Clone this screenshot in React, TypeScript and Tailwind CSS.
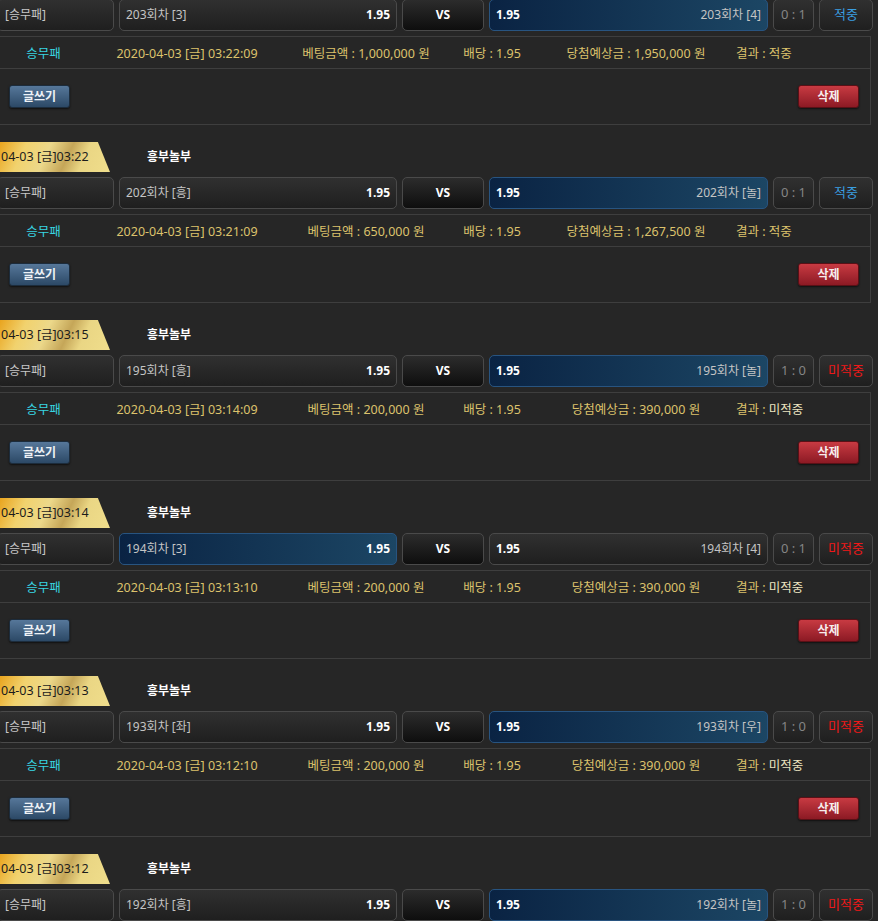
import React from "react";

type Bet = {
  time: string;
  round: number;
  left: string;
  right: string;
  pick: "left" | "right";
  score: string;
  win: boolean;
  placed: string;
  amount: string;
  payout: string;
};

const bets: Bet[] = [
  { time: "04-03 [금]03:23", round: 203, left: "[3]", right: "[4]", pick: "right", score: "0 : 1", win: true, placed: "2020-04-03 [금] 03:22:09", amount: "1,000,000", payout: "1,950,000" },
  { time: "04-03 [금]03:22", round: 202, left: "[흥]", right: "[놀]", pick: "right", score: "0 : 1", win: true, placed: "2020-04-03 [금] 03:21:09", amount: "650,000", payout: "1,267,500" },
  { time: "04-03 [금]03:15", round: 195, left: "[흥]", right: "[놀]", pick: "right", score: "1 : 0", win: false, placed: "2020-04-03 [금] 03:14:09", amount: "200,000", payout: "390,000" },
  { time: "04-03 [금]03:14", round: 194, left: "[3]", right: "[4]", pick: "left", score: "0 : 1", win: false, placed: "2020-04-03 [금] 03:13:10", amount: "200,000", payout: "390,000" },
  { time: "04-03 [금]03:13", round: 193, left: "[좌]", right: "[우]", pick: "right", score: "1 : 0", win: false, placed: "2020-04-03 [금] 03:12:10", amount: "200,000", payout: "390,000" },
  { time: "04-03 [금]03:12", round: 192, left: "[흥]", right: "[놀]", pick: "right", score: "1 : 0", win: false, placed: "2020-04-03 [금] 03:11:10", amount: "200,000", payout: "390,000" },
];

const plainBox =
  "h-full rounded-[5px] border border-[#4a4a4a] bg-[linear-gradient(180deg,#303030_0%,#1f1f1f_100%)]";
const pickedBox =
  "h-full rounded-[5px] border border-[#285480] bg-[linear-gradient(90deg,#0a2343_0%,#1c4664_100%)]";

function BetBlock({ bet }: { bet: Bet }) {
  return (
    <div className="pt-[17px]">
      <div className="flex h-[30px] items-center">
        <div className="flex h-[30px] w-[110px] items-center pl-px text-[12.5px] text-[#1c1c1c] [clip-path:polygon(0_0,89%_0,100%_100%,0_100%)] bg-[linear-gradient(115deg,#e9a41e_0%,#f1d26e_22%,#ecd88a_42%,#c5a658_60%,#ead684_74%,#f0de8c_100%)]">
          {bet.time}
        </div>
        <span className="ml-[37px] text-[12px] font-bold text-white">흥부놀부</span>
      </div>

      <div className="mt-[5px] flex h-[32px] gap-[5px] -ml-[3px] text-[12px]">
        <div className={`${plainBox} flex w-[117px] items-center pl-[7px] text-[#c8c8c8]`}>[승무패]</div>
        <div
          className={`${bet.pick === "left" ? pickedBox : plainBox} flex w-[278px] items-center justify-between px-[6px]`}
        >
          <span className="text-[#c4c4c4]">
            {bet.round}회차 {bet.left}
          </span>
          <span className="font-bold text-white">1.95</span>
        </div>
        <div className="flex h-full w-[82px] items-center justify-center rounded-[5px] border border-[#4a4a4a] bg-[linear-gradient(180deg,#2c2c2c_0%,#0e0e0e_100%)] font-bold text-white">
          VS
        </div>
        <div
          className={`${bet.pick === "right" ? pickedBox : plainBox} flex w-[279px] items-center justify-between px-[6px]`}
        >
          <span className="font-bold text-white">1.95</span>
          <span className="text-[#c4c4c4]">
            {bet.round}회차 {bet.right}
          </span>
        </div>
        <div className={`${plainBox} flex w-[41px] items-center justify-center text-[13px] text-[#858585]`}>
          {bet.score}
        </div>
        <div
          className={`${plainBox} flex w-[54px] items-center justify-center text-[13px] ${bet.win ? "text-[#3a9fe2]" : "text-[#f01818]"}`}
        >
          {bet.win ? "적중" : "미적중"}
        </div>
      </div>

      <div className="mt-[5px] -ml-px w-[872px] border border-[#3e3e3e]">
        <div className="flex h-[32px] items-center border-b border-[#3e3e3e] pt-[3px] text-[12.5px] text-[#dcc26c]">
          <div className="w-[87px] text-center text-[#38d4e2]">승무패</div>
          <div className="w-[200px] text-center">{bet.placed}</div>
          <div className="w-[158px] text-center">베팅금액 : {bet.amount} 원</div>
          <div className="w-[94px] text-center">배당 : 1.95</div>
          <div className="w-[194px] text-center">당첨예상금 : {bet.payout} 원</div>
          <div className="pl-[3px]">
            결과 : <span className={bet.win ? "" : "text-[#ece4c0]"}>{bet.win ? "적중" : "미적중"}</span>
          </div>
        </div>
        <div className="flex h-[55px] items-center justify-between pl-[9px] pr-[11px]">
          <button
            type="button"
            className="h-[23px] w-[61px] rounded-[3px] border border-[#1c2c3c] bg-[linear-gradient(180deg,#56779a_0%,#2c4966_100%)] text-[12px] font-bold text-[#eef2f6] shadow-[0_1px_2px_rgba(0,0,0,0.6)]"
          >
            글쓰기
          </button>
          <button
            type="button"
            className="h-[23px] w-[61px] rounded-[3px] border border-[#5a1016] bg-[linear-gradient(180deg,#c83a42_0%,#8c1a24_100%)] text-[12px] font-bold text-[#f6eeee] shadow-[0_1px_2px_rgba(0,0,0,0.6)]"
          >
            삭제
          </button>
        </div>
      </div>
    </div>
  );
}

export default function App() {
  return (
    <div className="h-[921px] w-[878px] overflow-hidden bg-[#262626] font-['Noto_Sans','Noto_Sans_CJK_KR',sans-serif]">
      <div className="-mt-[53px]">
        {bets.map((bet) => (
          <BetBlock key={bet.round} bet={bet} />
        ))}
      </div>
    </div>
  );
}
